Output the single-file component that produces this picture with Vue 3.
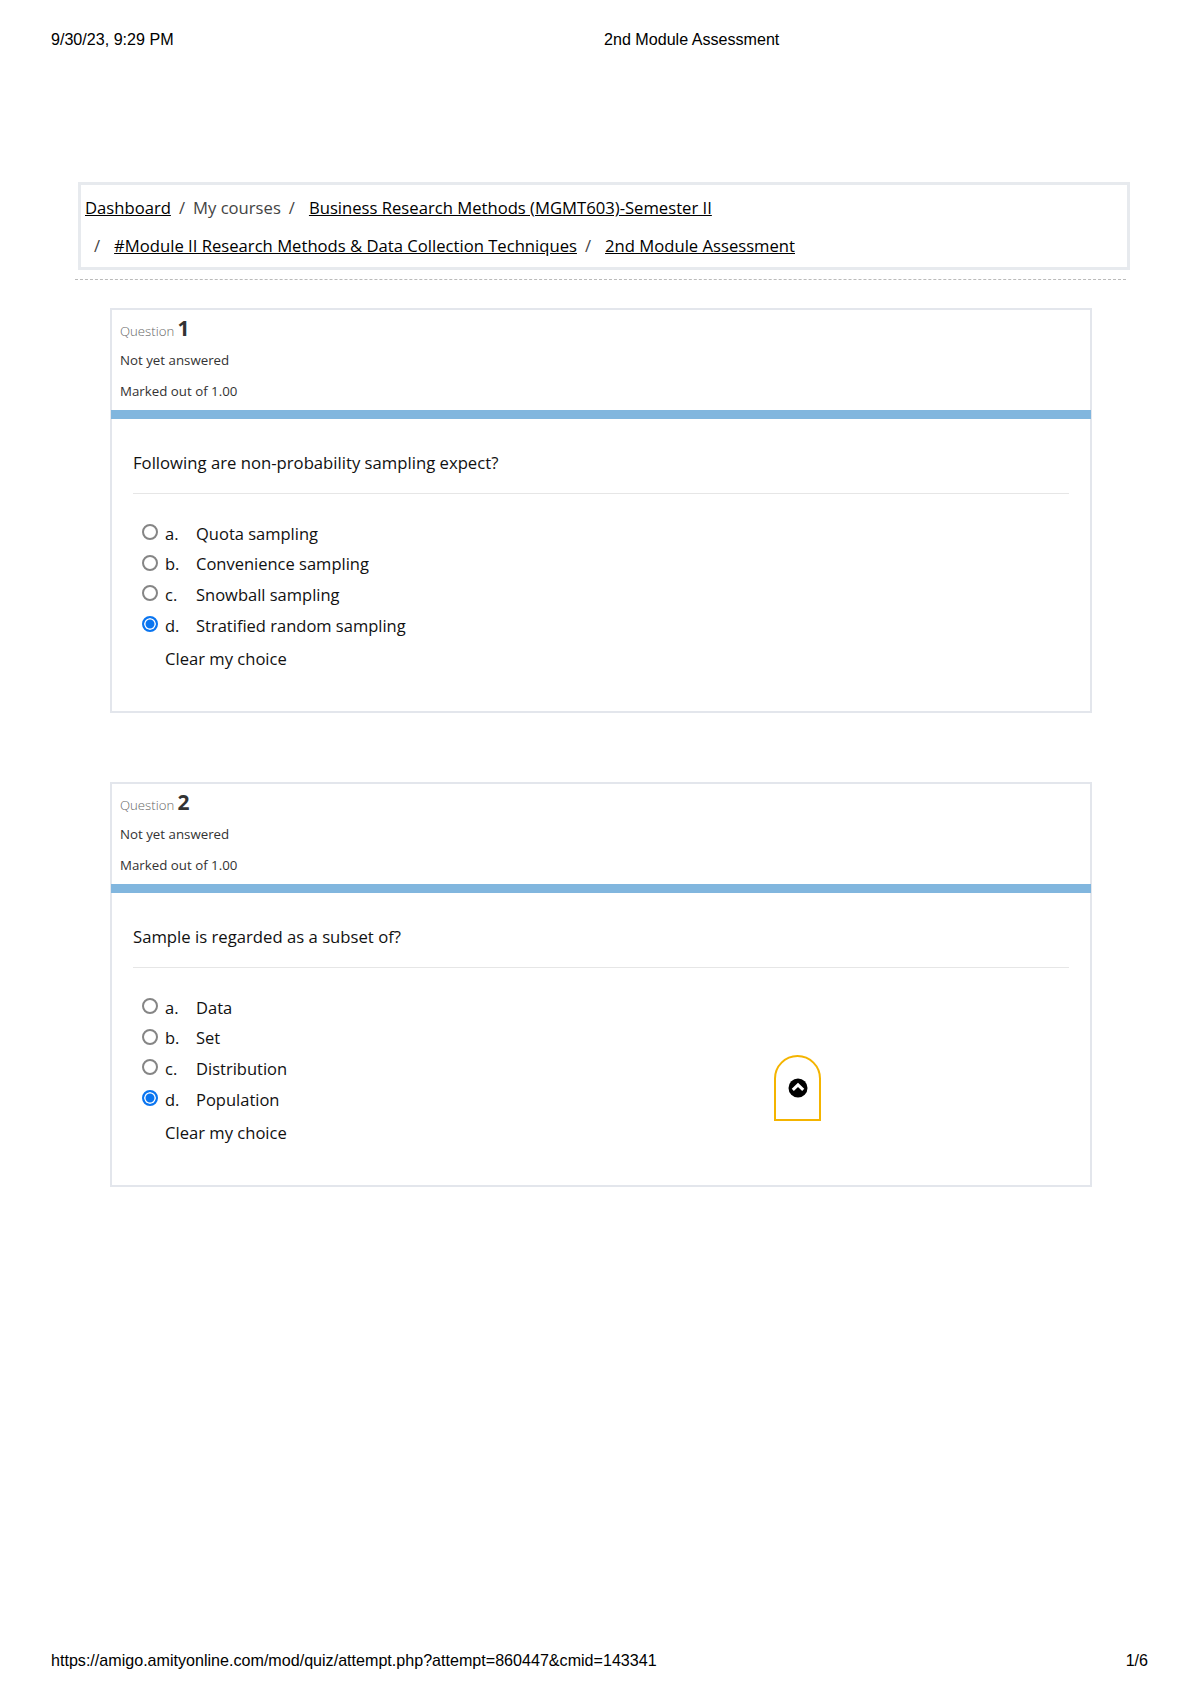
<template>
  <div class="page">
    <header class="print-head">
      <span>9/30/23, 9:29 PM</span>
      <span>2nd Module Assessment</span>
    </header>

    <nav class="crumbs">
      <div class="crumb-line">
        <a class="link">Dashboard</a>
        <span class="sep">/</span>
        <span class="muted">My courses</span>
        <span class="sep">/</span>
        <a class="link gap">Business Research Methods (MGMT603)-Semester II</a>
      </div>
      <div class="crumb-line second">
        <span class="sep">/</span>
        <a class="link gap">#Module II Research Methods &amp; Data Collection Techniques</a>
        <span class="sep">/</span>
        <a class="link gap">2nd Module Assessment</a>
      </div>
    </nav>
    <div class="dashed"></div>

    <section v-for="q in questions" :key="q.num" class="card">
      <div class="info">
        <div class="qno">Question <b>{{ q.num }}</b></div>
        <div class="state">Not yet answered</div>
        <div class="grade">Marked out of 1.00</div>
      </div>
      <div class="bar"></div>
      <div class="content">
        <p class="qtext">{{ q.text }}</p>
        <div class="answers">
          <div v-for="opt in q.options" :key="opt.letter" class="answer">
            <span class="radio" :class="{ checked: opt.letter === q.selected }"></span>
            <span class="letter">{{ opt.letter }}.</span>
            <span>{{ opt.label }}</span>
          </div>
        </div>
        <div class="clear">Clear my choice</div>
      </div>
    </section>

    <div class="to-top">
      <svg width="20" height="20" viewBox="0 0 20 20">
        <circle cx="10" cy="10" r="9.5" fill="#000" />
        <path d="M4.8 11.8 10 6.8l5.2 5" fill="none" stroke="#fff" stroke-width="3" />
      </svg>
    </div>

    <footer class="print-foot">
      <span>https://amigo.amityonline.com/mod/quiz/attempt.php?attempt=860447&amp;cmid=143341</span>
      <span>1/6</span>
    </footer>
  </div>
</template>

<script setup>
const questions = [
  {
    num: 1,
    text: 'Following are non-probability sampling expect?',
    selected: 'd',
    options: [
      { letter: 'a', label: 'Quota sampling' },
      { letter: 'b', label: 'Convenience sampling' },
      { letter: 'c', label: 'Snowball sampling' },
      { letter: 'd', label: 'Stratified random sampling' }
    ]
  },
  {
    num: 2,
    text: 'Sample is regarded as a subset of?',
    selected: 'd',
    options: [
      { letter: 'a', label: 'Data' },
      { letter: 'b', label: 'Set' },
      { letter: 'c', label: 'Distribution' },
      { letter: 'd', label: 'Population' }
    ]
  }
]
</script>

<style>
html, body {
  margin: 0;
  background: #fff;
}
</style>

<style scoped>
.page {
  position: relative;
  box-sizing: border-box;
  width: 1200px;
  height: 1698px;
  padding-top: 30px;
  display: flex;
  flex-direction: column;
  font-family: "Open Sans", "Noto Sans", sans-serif;
  color: #111;
  background: #fff;
}

.print-head,
.print-foot {
  font-family: "Liberation Sans", Arial, sans-serif;
  font-size: 16.1px;
  line-height: 18px;
  color: #000;
}

.print-head {
  display: grid;
  grid-template-columns: 553px 1fr;
  padding-left: 51px;
}

.print-foot {
  display: flex;
  justify-content: space-between;
  margin-top: auto;
  padding: 0 52px 29px 51px;
}

.crumbs {
  box-sizing: border-box;
  width: 1052px;
  height: 88px;
  margin: 134px 0 0 78px;
  padding: 3px 3px 0 4px;
  border: 3px solid #e7eaee;
  font-size: 16.65px;
}

.crumb-line {
  display: flex;
  align-items: center;
  height: 38px;
  white-space: nowrap;
}

.crumb-line.second {
  padding-left: 1px;
}

.link {
  color: #000;
  text-decoration: underline;
}

.link.gap {
  margin-left: 6px;
}

.muted {
  color: #444;
}

.sep {
  margin: 0 8px;
  color: #444;
}

.dashed {
  width: 1051px;
  margin: 9px 0 0 75px;
  border-top: 1px dashed #bbb;
}

.card {
  box-sizing: border-box;
  width: 982px;
  height: 405px;
  margin: 28px 0 41px 110px;
  border: 2px solid #e3e6ec;
}

.info {
  box-sizing: border-box;
  height: 100px;
  padding: 3px 8px 0 8px;
  font-size: 13.3px;
  color: #333;
}

.bar {
  height: 9px;
  margin: 0 -1px;
  background: #81b6de;
}

.qno {
  height: 32px;
  line-height: 30px;
  font-size: 13.2px;
  font-weight: 300;
  color: #666;
}

.qno b {
  font-size: 21px;
  font-weight: 700;
  color: #333;
}

.state,
.grade {
  height: 31px;
  line-height: 31px;
}

.content {
  padding: 0 21px;
}

.qtext {
  margin: 0;
  padding: 32px 0 18px;
  line-height: 24px;
  font-size: 16.7px;
  border-bottom: 1px solid #e6e6e6;
}

.answers {
  margin-top: 24px;
}

.answer {
  display: flex;
  align-items: center;
  height: 30.6px;
  padding-left: 9px;
  font-size: 16.5px;
}

.radio {
  box-sizing: border-box;
  width: 16px;
  height: 16px;
  margin: -2px 7px 0 0;
  border: 2px solid #858585;
  border-radius: 50%;
  background: #fff;
}

.radio.checked {
  border: 2px solid #0a75f0;
  box-shadow: inset 0 0 0 1.5px #fff;
  background: #0a75f0;
}

.letter {
  width: 31px;
}

.clear {
  margin: 4px 0 0 32px;
  line-height: 30px;
  font-size: 16.6px;
}

/* floating back-to-top tab left over in the print */
.to-top {
  position: absolute;
  left: 774px;
  top: 1055px;
  box-sizing: border-box;
  width: 47px;
  height: 66px;
  display: flex;
  align-items: center;
  justify-content: center;
  border: 2px solid #f4b400;
  border-radius: 24px 24px 0 0;
  background: #fff;
}
</style>
